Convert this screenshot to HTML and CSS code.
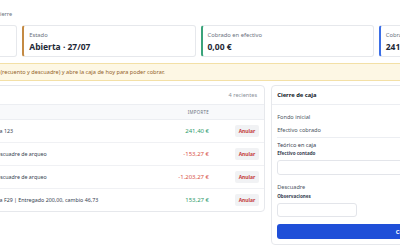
FILE: index.html
```html
<!DOCTYPE html>
<html lang="es">
<head>
    <meta charset="UTF-8">
    <title>Caja</title>
    <link rel="stylesheet" href="styles.css">
</head>
<body>
<div class="page">
    <div class="page-head">
        <h1>Caja</h1>
        <p class="subtitle">Abre la caja del día, registra los cobros en efectivo y haz el cierre</p>
    </div>

    <div class="cards">
        <div class="card card-gray">
            <div class="card-label">Fondo inicial</div>
            <div class="card-value">100,00 €</div>
        </div>
        <div class="card card-amber">
            <div class="card-label">Estado</div>
            <div class="card-value">Abierta · 27/07</div>
        </div>
        <div class="card card-green">
            <div class="card-label">Cobrado en efectivo</div>
            <div class="card-value">0,00 €</div>
        </div>
        <div class="card card-blue">
            <div class="card-label">Cobrado con tarjeta</div>
            <div class="card-value">241,40 €</div>
        </div>
    </div>

    <div class="alert">
        La caja del 27/07 sigue abierta. Realiza primero el cierre (recuento y descuadre) y abre la caja de hoy para poder cobrar.
    </div>

    <div class="layout">
        <section class="panel">
            <div class="panel-head">
                <span class="panel-title">Movimientos</span>
                <span class="panel-meta">4 recientes</span>
            </div>
            <div class="table-head">
                <span class="cell">Movimiento</span>
                <span class="cell"></span>
                <span class="cell amount">Importe</span>
                <span class="cell"></span>
            </div>
            <div class="row">
                <span class="cell time">10:12</span>
                <span class="cell">Factura 123</span>
                <span class="cell amount plus">241,40 €</span>
                <span class="cell action"><button class="btn-void">Anular</button></span>
            </div>
            <div class="row">
                <span class="cell time">11:40</span>
                <span class="cell">Por descuadre de arqueo</span>
                <span class="cell amount minus">-153,27 €</span>
                <span class="cell action"><button class="btn-void">Anular</button></span>
            </div>
            <div class="row">
                <span class="cell time">12:05</span>
                <span class="cell">Por descuadre de arqueo</span>
                <span class="cell amount minus">-1.203,27 €</span>
                <span class="cell action"><button class="btn-void">Anular</button></span>
            </div>
            <div class="row">
                <span class="cell time">13:30</span>
                <span class="cell">Factura F29 | Entregado 200,00, cambio 46,73</span>
                <span class="cell amount plus">153,27 €</span>
                <span class="cell action"><button class="btn-void">Anular</button></span>
            </div>
        </section>

        <section class="panel">
            <div class="panel-head">
                <span class="panel-title">Cierre de caja</span>
            </div>
            <div class="cierre-body">
                <div class="line"><span>Fondo inicial</span><span>100,00 €</span></div>
                <div class="line"><span>Efectivo cobrado</span><span>0,00 €</span></div>
                <div class="line line-total"><span>Teórico en caja</span><span>100,00 €</span></div>
                <label class="field-label" for="contado">Efectivo contado</label>
                <input class="input" id="contado" type="text">
                <div class="line line-plain"><span>Descuadre</span><span>—</span></div>
                <label class="field-label field-gap" for="obs">Observaciones</label>
                <input class="input input-short" id="obs" type="text">
                <button class="btn-primary">Cerrar caja</button>
            </div>
        </section>
    </div>
</div>
</body>
</html>
```

FILE: styles.css
```css
body {
    margin: 0;
    font-family: "Noto Sans", "Open Sans", sans-serif;
    background: #fff;
    color: #1f2937;
    overflow: hidden;
}
.page {
    width: 708px;
    margin-left: -156px;
}

.page-head h1 {
    margin: 0;
    font-size: 7px;
    line-height: 10px;
}
.subtitle {
    margin: 0 0 6px;
    font-size: 5.6px;
    line-height: 9px;
    color: #6b7280;
    white-space: nowrap;
}

.cards {
    display: grid;
    grid-template-columns: repeat(4, 1fr);
    gap: 5px;
}
.card {
    border: 1px solid #e6e8ec;
    border-left: 2px solid #cbd0d8;
    border-radius: 3px;
    padding: 5px 6px 3px 5px;
    background: #fff;
}
.card-amber { border-left-color: #c48a43; }
.card-green { border-left-color: #3aa37a; }
.card-blue { border-left-color: #3b6ee6; }
.card-label {
    font-size: 5.8px;
    line-height: 9px;
    color: #6b7280;
}
.card-value {
    margin-top: 1px;
    font-size: 8.5px;
    line-height: 12px;
    font-weight: 700;
    color: #1f2937;
}

.alert {
    margin-top: 6px;
    padding: 4px 8px;
    border: 1px solid #f3e0a6;
    border-radius: 3px;
    background: #fdf7e4;
    color: #94622b;
    font-size: 5.6px;
    line-height: 8px;
    white-space: nowrap;
}

.layout {
    display: grid;
    grid-template-columns: 3fr 2fr;
    gap: 6px;
    margin-top: 4px;
    align-items: start;
}
.panel {
    border: 1px solid #e6e8ec;
    border-radius: 4px;
    background: #fff;
    overflow: hidden;
}
.panel-head {
    height: 18px;
    padding: 0 7px 0 5px;
    border-bottom: 1px solid #eceef2;
    display: flex;
    align-items: center;
    justify-content: space-between;
}
.panel-title {
    font-size: 5.8px;
    font-weight: 700;
    color: #111827;
}
.panel-meta {
    font-size: 5.6px;
    color: #8a9099;
}

.table-head,
.row {
    display: grid;
    grid-template-columns: 133px 167px 70px 49px;
    align-items: center;
}
.table-head {
    height: 14px;
    background: #f8f9fb;
    border-bottom: 1px solid #eceef2;
    font-size: 4.4px;
    letter-spacing: 0.3px;
    text-transform: uppercase;
    color: #6b7280;
}
.row {
    height: 22px;
    border-bottom: 1px solid #f0f1f4;
    font-size: 5.3px;
    color: #374151;
    white-space: nowrap;
}
.row:last-child {
    border-bottom: 0;
}
.cell {
    padding: 0 6px;
    overflow: hidden;
}
.amount {
    text-align: right;
}
.row .amount {
    font-size: 6px;
}
.plus { color: #2f9b6c; }
.minus { color: #d9544a; }
.action {
    text-align: right;
    padding-right: 5px;
}
.btn-void {
    width: 24px;
    height: 12px;
    padding: 0;
    border: 0;
    border-radius: 2px;
    background: #f1f2f4;
    color: #c43b3b;
    font-family: inherit;
    font-size: 5px;
    font-weight: 700;
}

.cierre-body {
    padding: 6px 5px 5px;
}
.line {
    display: flex;
    justify-content: space-between;
    font-size: 5.6px;
    line-height: 13px;
    color: #4b5563;
}
.line-total {
    border-top: 1px solid #eceef2;
    padding-top: 3px;
    line-height: 9px;
    color: #374151;
}
.line-plain {
    margin-top: 7px;
    line-height: 10px;
}
.field-label {
    display: block;
    font-size: 4.6px;
    line-height: 6px;
    font-weight: 700;
    color: #374151;
}
.field-gap {
    margin-top: 1px;
}
.input {
    display: block;
    box-sizing: border-box;
    width: 100%;
    height: 15px;
    margin-top: 4px;
    border: 1px solid #e3e5ea;
    border-radius: 3px;
    background: #fff;
}
.input-short {
    width: 80px;
    height: 14px;
}
.btn-primary {
    display: block;
    width: 100%;
    height: 15px;
    margin-top: 7px;
    border: 0;
    border-radius: 3px;
    background: #1f4fd8;
    color: #fff;
    font-family: inherit;
    font-size: 5.8px;
    font-weight: 700;
}
```
